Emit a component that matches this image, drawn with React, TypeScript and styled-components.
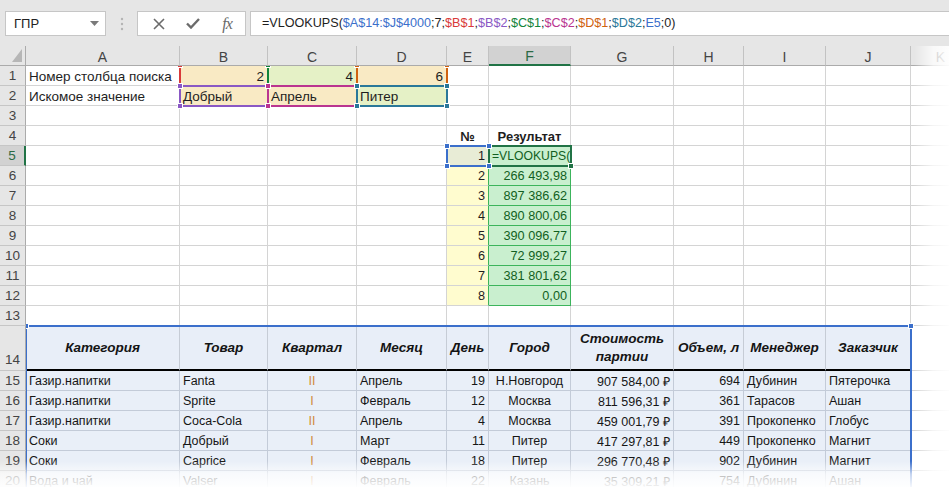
import React from "react";
import styled, { createGlobalStyle, css } from "styled-components";

const COLS = [26, 154, 88, 89, 90, 42, 82, 103, 70, 82, 85, 60];
const ROWS = [20, ...Array(13).fill(20), 45, ...Array(6).fill(20)];
const LETTERS = ["A", "B", "C", "D", "E", "F", "G", "H", "I", "J", "K"];

const colX = (i: number) => COLS.slice(0, i).reduce((a, b) => a + b, 0);
const rowY = (i: number) => ROWS.slice(0, i).reduce((a, b) => a + b, 0);

const TAN = "#f9eac4";
const LIME = "#e5f1c6";
const YELLOW = "#fffccf";
const GOOD = "#c9efcf";
const GOOD_TXT = "#125f22";
const GOOD_LINE = "#3cb45c";
const GRID = "#d4d4d4";

const GlobalStyle = createGlobalStyle`
  html, body { margin: 0; padding: 0; background: #fff; }
  body { font-family: "Liberation Sans", Arial, sans-serif; color: #1e1e1e; }
  * { box-sizing: border-box; }
`;

const Page = styled.div`
  position: relative;
  width: 949px;
  height: 487px;
  overflow: hidden;
  background: #fff;
`;

/* ---------- formula bar ---------- */

const Toolbar = styled.div`
  height: 46px;
  background: #e6e6e6;
  display: flex;
  align-items: flex-start;
  padding: 11px 0 0 5px;
`;

const NameBox = styled.div`
  width: 101px;
  height: 25px;
  background: #fff;
  border: 1px solid #c6c6c6;
  display: flex;
  align-items: center;
  justify-content: space-between;
  padding: 0 6px 0 8px;
  font-size: 13px;
  color: #222;
`;

const Grip = styled.div`
  width: 31px;
  height: 25px;
  display: flex;
  align-items: center;
  justify-content: center;
`;

const FxButtons = styled.div`
  width: 109px;
  height: 25px;
  background: #fff;
  border: 1px solid #c6c6c6;
  display: flex;
  align-items: center;
  padding-left: 4px;
`;

const IconSlot = styled.div`
  width: 34px;
  height: 23px;
  display: flex;
  align-items: center;
  justify-content: center;
`;

const FxLabel = styled.span`
  font-family: "Liberation Serif", "Times New Roman", serif;
  font-style: italic;
  font-size: 16px;
  color: #6a6a6a;
  letter-spacing: -1px;
`;

const FormulaInput = styled.div`
  flex: 1;
  margin-left: 4px;
  height: 25px;
  background: #fff;
  border: 1px solid #c6c6c6;
  border-right: none;
  padding-left: 11px;
  font-size: 12.6px;
  line-height: 23px;
  white-space: nowrap;
  color: #1e1e1e;
`;

const Ref = styled.span<{ $c: string }>`
  color: ${(p) => p.$c};
`;

/* ---------- sheet ---------- */

const Sheet = styled.div`
  position: relative;
  display: grid;
  grid-template-columns: ${COLS.map((c) => c + "px").join(" ")};
  grid-template-rows: ${ROWS.map((r) => r + "px").join(" ")};
  width: ${COLS.reduce((a, b) => a + b, 0)}px;
`;

const Corner = styled.div`
  position: relative;
  z-index: 3;
  background: #e6e6e6;
  border-right: 1px solid #ababab;
  border-bottom: 1px solid #ababab;
`;

const ColHead = styled.div<{ $active?: boolean }>`
  position: relative;
  z-index: 3;
  display: flex;
  align-items: center;
  justify-content: center;
  font-size: 14px;
  padding-top: 2px;
  color: #444;
  background: #e6e6e6;
  border-right: 1px solid #c2c2c2;
  border-bottom: 1px solid #ababab;
  ${(p) =>
    p.$active &&
    css`
      background: #d2d2d2;
      color: #2b6a44;
      border-bottom: 2px solid #217346;
    `}
`;

const RowHead = styled.div<{ $active?: boolean; $tall?: boolean }>`
  position: relative;
  z-index: 3;
  display: flex;
  align-items: ${(p) => (p.$tall ? "flex-end" : "center")};
  justify-content: center;
  padding-bottom: ${(p) => (p.$tall ? "3px" : "0")};
  font-size: 13.5px;
  color: #444;
  background: #e6e6e6;
  border-right: 1px solid #ababab;
  border-bottom: 1px solid #c6c6c6;
  ${(p) =>
    p.$active &&
    css`
      background: #d2d2d2;
      color: #2b6a44;
      border-right: 2px solid #217346;
    `}
`;

type Align = "left" | "right" | "center";
const justify = (a?: Align) =>
  a === "right" ? "flex-end" : a === "center" ? "center" : "flex-start";

type Size = "text" | "num" | "bold" | "small";
const SIZES: Record<Size, string> = {
  text: "13.5px",
  num: "12.7px",
  bold: "13px",
  small: "12.2px",
};

const Cell = styled.div<{
  $align?: Align;
  $fill?: string;
  $grid?: string;
  $edge?: string;
  $size?: Size;
  $tone?: string;
}>`
  display: flex;
  align-items: center;
  justify-content: ${(p) => justify(p.$align)};
  padding: 1px 3px 0 3px;
  overflow: hidden;
  white-space: nowrap;
  font-size: ${(p) => SIZES[p.$size || "text"]};
  font-weight: ${(p) => (p.$size === "bold" ? 700 : 400)};
  color: ${(p) => p.$tone || "#1e1e1e"};
  background: ${(p) => p.$fill || "#fff"};
  border-bottom: 1px solid ${(p) => p.$grid || GRID};
  border-right: 1px solid ${(p) => p.$edge || p.$grid || GRID};
`;

const HeadCell = styled.div`
  display: flex;
  align-items: center;
  justify-content: center;
  text-align: center;
  padding: 0 3px;
  font-size: 13.5px;
  line-height: 18px;
  font-weight: 700;
  font-style: italic;
  color: #141414;
  background: #e8eef8;
  border-right: 1px solid #c6ccd6;
  border-bottom: 2px solid #000;
`;

const BodyCell = styled.div<{ $align: Align; $tone?: string }>`
  display: flex;
  align-items: center;
  justify-content: ${(p) => justify(p.$align)};
  padding: 1px 3px 0 3px;
  overflow: hidden;
  white-space: nowrap;
  font-size: 12.5px;
  color: ${(p) => p.$tone || "#161616"};
  background: #e9eff8;
  border-right: 1px solid #c3cbd8;
  border-bottom: 1px solid #c3cbd8;
`;

/* range highlights laid over the grid */

const RefBox = styled.div<{ $c: string }>`
  position: absolute;
  border: 2px solid ${(p) => p.$c};
  pointer-events: none;
`;

const Handle = styled.div<{ $c: string; $x: "l" | "r"; $y: "t" | "b" }>`
  position: absolute;
  z-index: 2;
  width: 6px;
  height: 6px;
  background: ${(p) => p.$c};
  border: 1px solid #fff;
  ${(p) => (p.$x === "l" ? "left: -4px;" : "right: -4px;")}
  ${(p) => (p.$y === "t" ? "top: -4px;" : "bottom: -4px;")}
`;

const Fade = styled.div<{ $side: "right" | "bottom" }>`
  position: absolute;
  z-index: 5;
  pointer-events: none;
  ${(p) =>
    p.$side === "right"
      ? css`
          top: 46px;
          right: 0;
          width: 35px;
          bottom: 0;
          background: linear-gradient(
            to right,
            rgba(255, 255, 255, 0) 0%,
            rgba(255, 255, 255, 0.75) 55%,
            rgba(255, 255, 255, 0.95) 100%
          );
        `
      : css`
          left: 0;
          right: 0;
          bottom: 0;
          height: 26px;
          background: linear-gradient(
            to bottom,
            rgba(255, 255, 255, 0) 0%,
            rgba(255, 255, 255, 0.7) 50%,
            rgba(255, 255, 255, 0.95) 100%
          );
        `}
`;

/* ---------- data ---------- */

type Spec = {
  v: string;
  align?: Align;
  fill?: string;
  grid?: string;
  edge?: string;
  size?: Size;
  tone?: string;
};

const results = [
  "266 493,98",
  "897 386,62",
  "890 800,06",
  "390 096,77",
  "72 999,27",
  "381 801,62",
  "0,00",
];

const cells: Record<string, Spec> = {
  A1: { v: "Номер столбца поиска" },
  B1: { v: "2", align: "right", fill: TAN },
  C1: { v: "4", align: "right", fill: LIME },
  D1: { v: "6", align: "right", fill: TAN },
  A2: { v: "Искомое значение" },
  B2: { v: "Добрый", fill: TAN },
  C2: { v: "Апрель", fill: TAN },
  D2: { v: "Питер", fill: LIME },
  E4: { v: "№", align: "center", size: "bold" },
  F4: { v: "Результат", align: "center", size: "bold" },
  E5: { v: "1", align: "right", fill: "#e8ecd6", size: "num" },
  F5: { v: "=VLOOKUPS(", fill: GOOD, tone: GOOD_TXT, grid: GOOD_LINE, size: "small" },
};
results.forEach((val, i) => {
  cells["E" + (i + 6)] = {
    v: String(i + 2),
    align: "right",
    fill: YELLOW,
    edge: GOOD_LINE,
    size: "num",
  };
  cells["F" + (i + 6)] = {
    v: val,
    align: "right",
    fill: GOOD,
    grid: GOOD_LINE,
    tone: GOOD_TXT,
    size: "num",
  };
});

const tableHead = [
  "Категория",
  "Товар",
  "Квартал",
  "Месяц",
  "День",
  "Город",
  "Стоимость партии",
  "Объем, л",
  "Менеджер",
  "Заказчик",
];

const tableAlign: Align[] = [
  "left",
  "left",
  "center",
  "left",
  "right",
  "center",
  "right",
  "right",
  "left",
  "left",
];

const tableRows = [
  ["Газир.напитки", "Fanta", "II", "Апрель", "19", "Н.Новгород", "907 584,00 ₽", "694", "Дубинин", "Пятерочка"],
  ["Газир.напитки", "Sprite", "I", "Февраль", "12", "Москва", "811 596,31 ₽", "361", "Тарасов", "Ашан"],
  ["Газир.напитки", "Coca-Cola", "II", "Апрель", "4", "Москва", "459 001,79 ₽", "391", "Прокопенко", "Глобус"],
  ["Соки", "Добрый", "I", "Март", "11", "Питер", "417 297,81 ₽", "449", "Прокопенко", "Магнит"],
  ["Соки", "Caprice", "I", "Февраль", "18", "Питер", "296 770,48 ₽", "902", "Дубинин", "Магнит"],
  ["Вода и чай", "Valser", "I", "Февраль", "22", "Казань", "35 309,21 ₽", "754", "Дубинин", "Ашан"],
];

type Box = {
  col: number;
  row: number;
  span?: number;
  color: string;
  handles: Array<["l" | "r", "t" | "b"]>;
  lift?: number;
  tall?: number;
};

const ALL: Array<["l" | "r", "t" | "b"]> = [
  ["l", "t"],
  ["r", "t"],
  ["l", "b"],
  ["r", "b"],
];

const boxes: Box[] = [
  { col: 2, row: 1, color: "#d93a3a", handles: ALL, lift: 1 },
  { col: 3, row: 1, color: "#12843a", handles: ALL, lift: 1 },
  { col: 4, row: 1, color: "#d0620f", handles: ALL, lift: 1 },
  { col: 2, row: 2, color: "#8a58c4", handles: ALL },
  { col: 3, row: 2, color: "#ba3590", handles: ALL },
  { col: 4, row: 2, color: "#2a7899", handles: ALL },
  { col: 5, row: 5, color: "#3b6fcb", handles: ALL },
  { col: 6, row: 5, color: "#217346", handles: [["r", "b"]] },
  { col: 1, row: 14, span: 10, color: "#3b6fcb", handles: [["l", "t"], ["r", "t"]], tall: 300 },
];

/* ---------- icons ---------- */

const Caret = () => (
  <svg width="9" height="5" viewBox="0 0 9 5">
    <polygon points="0,0 9,0 4.5,5" fill="#7a7a7a" />
  </svg>
);

const Dots = () => (
  <svg width="4" height="16" viewBox="0 0 4 16">
    <circle cx="2" cy="3" r="1.2" fill="#b4b4b4" />
    <circle cx="2" cy="8" r="1.2" fill="#b4b4b4" />
    <circle cx="2" cy="13" r="1.2" fill="#b4b4b4" />
  </svg>
);

const CancelIcon = () => (
  <svg width="12" height="12" viewBox="0 0 12 12">
    <path d="M1 1 L11 11 M11 1 L1 11" stroke="#6b6b6b" strokeWidth="1.6" fill="none" />
  </svg>
);

const EnterIcon = () => (
  <svg width="14" height="11" viewBox="0 0 14 11">
    <path d="M1 5.5 L5 9.5 L13 1" stroke="#6b6b6b" strokeWidth="2.4" fill="none" />
  </svg>
);

const CornerMark = () => (
  <svg width="26" height="20" viewBox="0 0 26 20">
    <polygon points="22,3 22,16 12,16" fill="#b6b6b6" />
  </svg>
);

/* ---------- page ---------- */

export default function App() {
  const grid: React.ReactNode[] = [];

  grid.push(
    <Corner key="corner">
      <CornerMark />
    </Corner>
  );
  LETTERS.forEach((l) =>
    grid.push(
      <ColHead key={"h" + l} $active={l === "F"}>
        {l}
      </ColHead>
    )
  );

  for (let r = 1; r <= 20; r++) {
    grid.push(
      <RowHead key={"r" + r} $active={r === 5} $tall={r === 14}>
        {r}
      </RowHead>
    );
    LETTERS.forEach((l, i) => {
      const key = l + r;
      if (r >= 14 && i < 10) {
        if (r === 14) {
          grid.push(<HeadCell key={key}>{tableHead[i]}</HeadCell>);
        } else {
          const val = tableRows[r - 15][i];
          grid.push(
            <BodyCell
              key={key}
              $align={tableAlign[i]}
              $tone={i === 2 ? "#d08a3a" : undefined}
            >
              {val}
            </BodyCell>
          );
        }
        return;
      }
      const s = cells[key];
      grid.push(
        <Cell
          key={key}
          $align={s?.align}
          $fill={s?.fill}
          $grid={s?.grid}
          $edge={s?.edge}
          $size={s?.size}
          $tone={s?.tone}
        >
          {s?.v}
        </Cell>
      );
    });
  }

  return (
    <Page>
      <GlobalStyle />
      <Toolbar>
        <NameBox>
          <span>ГПР</span>
          <Caret />
        </NameBox>
        <Grip>
          <Dots />
        </Grip>
        <FxButtons>
          <IconSlot>
            <CancelIcon />
          </IconSlot>
          <IconSlot>
            <EnterIcon />
          </IconSlot>
          <IconSlot>
            <FxLabel>fx</FxLabel>
          </IconSlot>
        </FxButtons>
        <FormulaInput>
          =VLOOKUPS(<Ref $c="#3b6fcb">$A$14:$J$4000</Ref>;7;
          <Ref $c="#d93a3a">$B$1</Ref>;<Ref $c="#8a58c4">$B$2</Ref>;
          <Ref $c="#12843a">$C$1</Ref>;<Ref $c="#ba3590">$C$2</Ref>;
          <Ref $c="#d0620f">$D$1</Ref>;<Ref $c="#2a7899">$D$2</Ref>;
          <Ref $c="#3b6fcb">E5</Ref>;0)
        </FormulaInput>
      </Toolbar>

      <Sheet>
        {grid}
        {boxes.map((b, i) => {
          const x = colX(b.col);
          const y = rowY(b.row);
          const w = colX(b.col + (b.span || 1)) - x;
          const h = b.tall || ROWS[b.row];
          const lift = b.lift || 0;
          return (
            <RefBox
              key={"box" + i}
              $c={b.color}
              style={{
                left: x - 1,
                top: y - 1 - lift,
                width: w + 2,
                height: h + 2 + lift,
              }}
            >
              {b.handles.map(([hx, hy]) => (
                <Handle key={hx + hy} $c={b.color} $x={hx} $y={hy} />
              ))}
            </RefBox>
          );
        })}
      </Sheet>

      <Fade $side="right" />
      <Fade $side="bottom" />
    </Page>
  );
}
